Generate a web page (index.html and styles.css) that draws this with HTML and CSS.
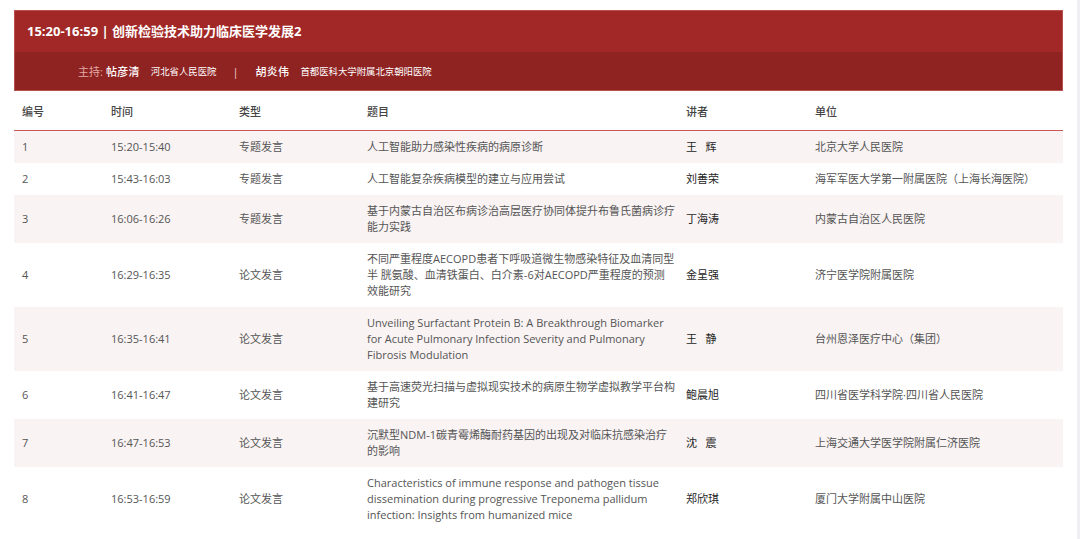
FILE: index.html
```html
<!DOCTYPE html>
<html lang="zh-CN">
<head>
<meta charset="utf-8">
<title>日程</title>
<link rel="stylesheet" href="styles.css">
</head>
<body>
<div class="card">
  <div class="head">
    <div class="title">15:20-16:59 | 创新检验技术助力临床医学发展2</div>
    <div class="hosts">
      <span class="label">主持:</span>
      <span class="name">帖彦清</span>
      <span class="org">河北省人民医院</span>
      <span class="sep">|</span>
      <span class="name">胡炎伟</span>
      <span class="org">首都医科大学附属北京朝阳医院</span>
    </div>
  </div>
  <table class="sched">
    <colgroup>
      <col class="c-no"><col class="c-time"><col class="c-type"><col class="c-topic"><col class="c-spk"><col class="c-org">
    </colgroup>
    <thead>
      <tr><th>编号</th><th>时间</th><th>类型</th><th>题目</th><th>讲者</th><th>单位</th></tr>
    </thead>
    <tbody>
      <tr class="alt"><td>1</td><td>15:20-15:40</td><td>专题发言</td><td class="topic">人工智能助力感染性疾病的病原诊断</td><td class="spk">王&nbsp;&nbsp;&nbsp;辉</td><td>北京大学人民医院</td></tr>
      <tr><td>2</td><td>15:43-16:03</td><td>专题发言</td><td class="topic">人工智能复杂疾病模型的建立与应用尝试</td><td class="spk">刘善荣</td><td>海军军医大学第一附属医院（上海长海医院）</td></tr>
      <tr class="alt"><td>3</td><td>16:06-16:26</td><td>专题发言</td><td class="topic">基于内蒙古自治区布病诊治高层医疗协同体提升布鲁氏菌病诊疗能力实践</td><td class="spk">丁海涛</td><td>内蒙古自治区人民医院</td></tr>
      <tr><td>4</td><td>16:29-16:35</td><td>论文发言</td><td class="topic">不同严重程度AECOPD患者下呼吸道微生物感染特征及血清同型半 胱氨酸、血清铁蛋白、白介素-6对AECOPD严重程度的预测效能研究</td><td class="spk">金呈强</td><td>济宁医学院附属医院</td></tr>
      <tr class="alt"><td>5</td><td>16:35-16:41</td><td>论文发言</td><td class="topic">Unveiling Surfactant Protein B: A Breakthrough Biomarker for Acute Pulmonary Infection Severity and Pulmonary Fibrosis Modulation</td><td class="spk">王&nbsp;&nbsp;&nbsp;静</td><td>台州恩泽医疗中心（集团）</td></tr>
      <tr><td>6</td><td>16:41-16:47</td><td>论文发言</td><td class="topic">基于高速荧光扫描与虚拟现实技术的病原生物学虚拟教学平台构建研究</td><td class="spk">鲍晨旭</td><td>四川省医学科学院·四川省人民医院</td></tr>
      <tr class="alt"><td>7</td><td>16:47-16:53</td><td>论文发言</td><td class="topic">沉默型NDM-1碳青霉烯酶耐药基因的出现及对临床抗感染治疗的影响</td><td class="spk">沈&nbsp;&nbsp;&nbsp;震</td><td>上海交通大学医学院附属仁济医院</td></tr>
      <tr><td>8</td><td>16:53-16:59</td><td>论文发言</td><td class="topic">Characteristics of immune response and pathogen tissue dissemination during progressive Treponema pallidum infection: Insights from humanized mice</td><td class="spk">郑欣琪</td><td>厦门大学附属中山医院</td></tr>
    </tbody>
  </table>
</div>
<div class="scrollbar"></div>
</body>
</html>
```

FILE: styles.css
```css
html, body {
  margin: 0;
  background: #ffffff;
}
body {
  padding: 10px 17px 0 14px;
  font-family: "Open Sans", "Noto Sans CJK SC", sans-serif;
  font-size: 11px;
  color: #555555;
  overflow: hidden;
}
.card {
  width: 1049px;
}
.head {
  border: 1px solid #b8504d;
  background: #a12826;
  color: #ffffff;
}
.title {
  height: 41px;
  padding-left: 12px;
  padding-bottom: 2px;
  box-sizing: border-box;
  display: flex;
  align-items: center;
  font-size: 13px;
  font-weight: 700;
}
.hosts {
  height: 38px;
  background: #8f2322;
  display: flex;
  align-items: center;
  padding-left: 63px;
}
.hosts .label {
  color: #e3a9a6;
  font-size: 11px;
  margin-right: 3px;
}
.hosts .name {
  font-size: 11px;
  font-weight: 500;
  color: #ffffff;
  letter-spacing: 0.3px;
}
.hosts .org {
  font-size: 9.4px;
  margin-left: 11px;
  color: #ffffff;
}
.hosts .sep {
  margin: 0 17px 0 16px;
  font-size: 11px;
  color: #f0d0cf;
}
.sched {
  width: 1049px;
  border-collapse: collapse;
  table-layout: fixed;
}
.c-no { width: 89px; }
.c-time { width: 128px; }
.c-type { width: 128px; }
.c-topic { width: 319px; }
.c-spk { width: 129px; }
.c-org { width: 256px; }
.sched th {
  height: 39px;
  text-align: left;
  font-weight: 500;
  color: #444444;
  padding: 0 8px;
  border-bottom: 1px solid #c85753;
  vertical-align: middle;
}
.sched td {
  padding: 8px 14px 8px 8px;
  line-height: 16px;
  vertical-align: middle;
}
.sched td.topic {
  padding-right: 3px;
}
.sched tr.alt td {
  background: #f9f3f3;
}
.sched td.spk {
  color: #262626;
  font-weight: 400;
}
.scrollbar {
  position: fixed;
  top: 0;
  right: 0;
  width: 3px;
  height: 539px;
  background: #f0f0f4;
}
```
